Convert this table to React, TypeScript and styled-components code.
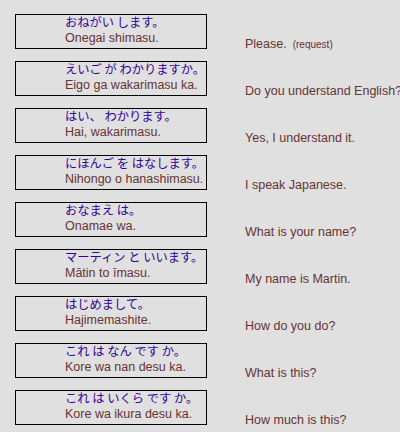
import styled, { createGlobalStyle } from "styled-components";

const GlobalStyle = createGlobalStyle`
  html, body {
    margin: 0;
    padding: 0;
    background-color: #e0e0e0;
    overflow: hidden;
  }
`;

const Page = styled.div`
  width: 400px;
  height: 432px;
  padding: 14px 0 0 15px;
  box-sizing: border-box;
  overflow: hidden;
  font-family: "Liberation Sans", Arial, sans-serif;
`;

const PhraseList = styled.div`
  display: flex;
  flex-direction: column;
  gap: 12px;
`;

const Row = styled.div`
  display: grid;
  grid-template-columns: 192px 1fr;
  column-gap: 38px;
  height: 35px;
  align-items: start;
`;

const PhraseBox = styled.div`
  height: 35px;
  box-sizing: border-box;
  border: 1px solid #000;
  padding-left: 49px;
  white-space: nowrap;
`;

const Kana = styled.p`
  margin: 0;
  font-family: "Noto Sans CJK JP", "Liberation Sans", sans-serif;
  font-size: 12.25px;
  line-height: 15px;
  color: #330099;
`;

const Romaji = styled.p`
  margin: 1px 0 0;
  font-size: 12.5px;
  line-height: 15px;
  color: #663333;
`;

const Meaning = styled.p`
  margin: 0;
  padding-top: 23px;
  font-size: 12.5px;
  line-height: 15px;
  color: #663333;
  white-space: nowrap;
`;

const Note = styled.span`
  font-size: 10px;
  margin-left: 6px;
`;

type Phrase = {
  kana: string;
  romaji: string;
  meaning: string;
  note?: string;
};

const phrases: Phrase[] = [
  { kana: "おねがい します。", romaji: "Onegai shimasu.", meaning: "Please.", note: "(request)" },
  { kana: "えいご が わかりますか。", romaji: "Eigo ga wakarimasu ka.", meaning: "Do you understand English?" },
  { kana: "はい、 わかります。", romaji: "Hai, wakarimasu.", meaning: "Yes, I understand it." },
  { kana: "にほんご を はなします。", romaji: "Nihongo o hanashimasu.", meaning: "I speak Japanese." },
  { kana: "おなまえ は。", romaji: "Onamae wa.", meaning: "What is your name?" },
  { kana: "マーティン と いいます。", romaji: "Mātin to īmasu.", meaning: "My name is Martin." },
  { kana: "はじめまして。", romaji: "Hajimemashite.", meaning: "How do you do?" },
  { kana: "これ は なん です か。", romaji: "Kore wa nan desu ka.", meaning: "What is this?" },
  { kana: "これ は いくら です か。", romaji: "Kore wa ikura desu ka.", meaning: "How much is this?" },
];

export default function App() {
  return (
    <>
      <GlobalStyle />
      <Page>
        <PhraseList>
          {phrases.map((p) => (
            <Row key={p.romaji}>
              <PhraseBox>
                <Kana>{p.kana}</Kana>
                <Romaji>{p.romaji}</Romaji>
              </PhraseBox>
              <Meaning>
                {p.meaning}
                {p.note && <Note>{p.note}</Note>}
              </Meaning>
            </Row>
          ))}
        </PhraseList>
      </Page>
    </>
  );
}
